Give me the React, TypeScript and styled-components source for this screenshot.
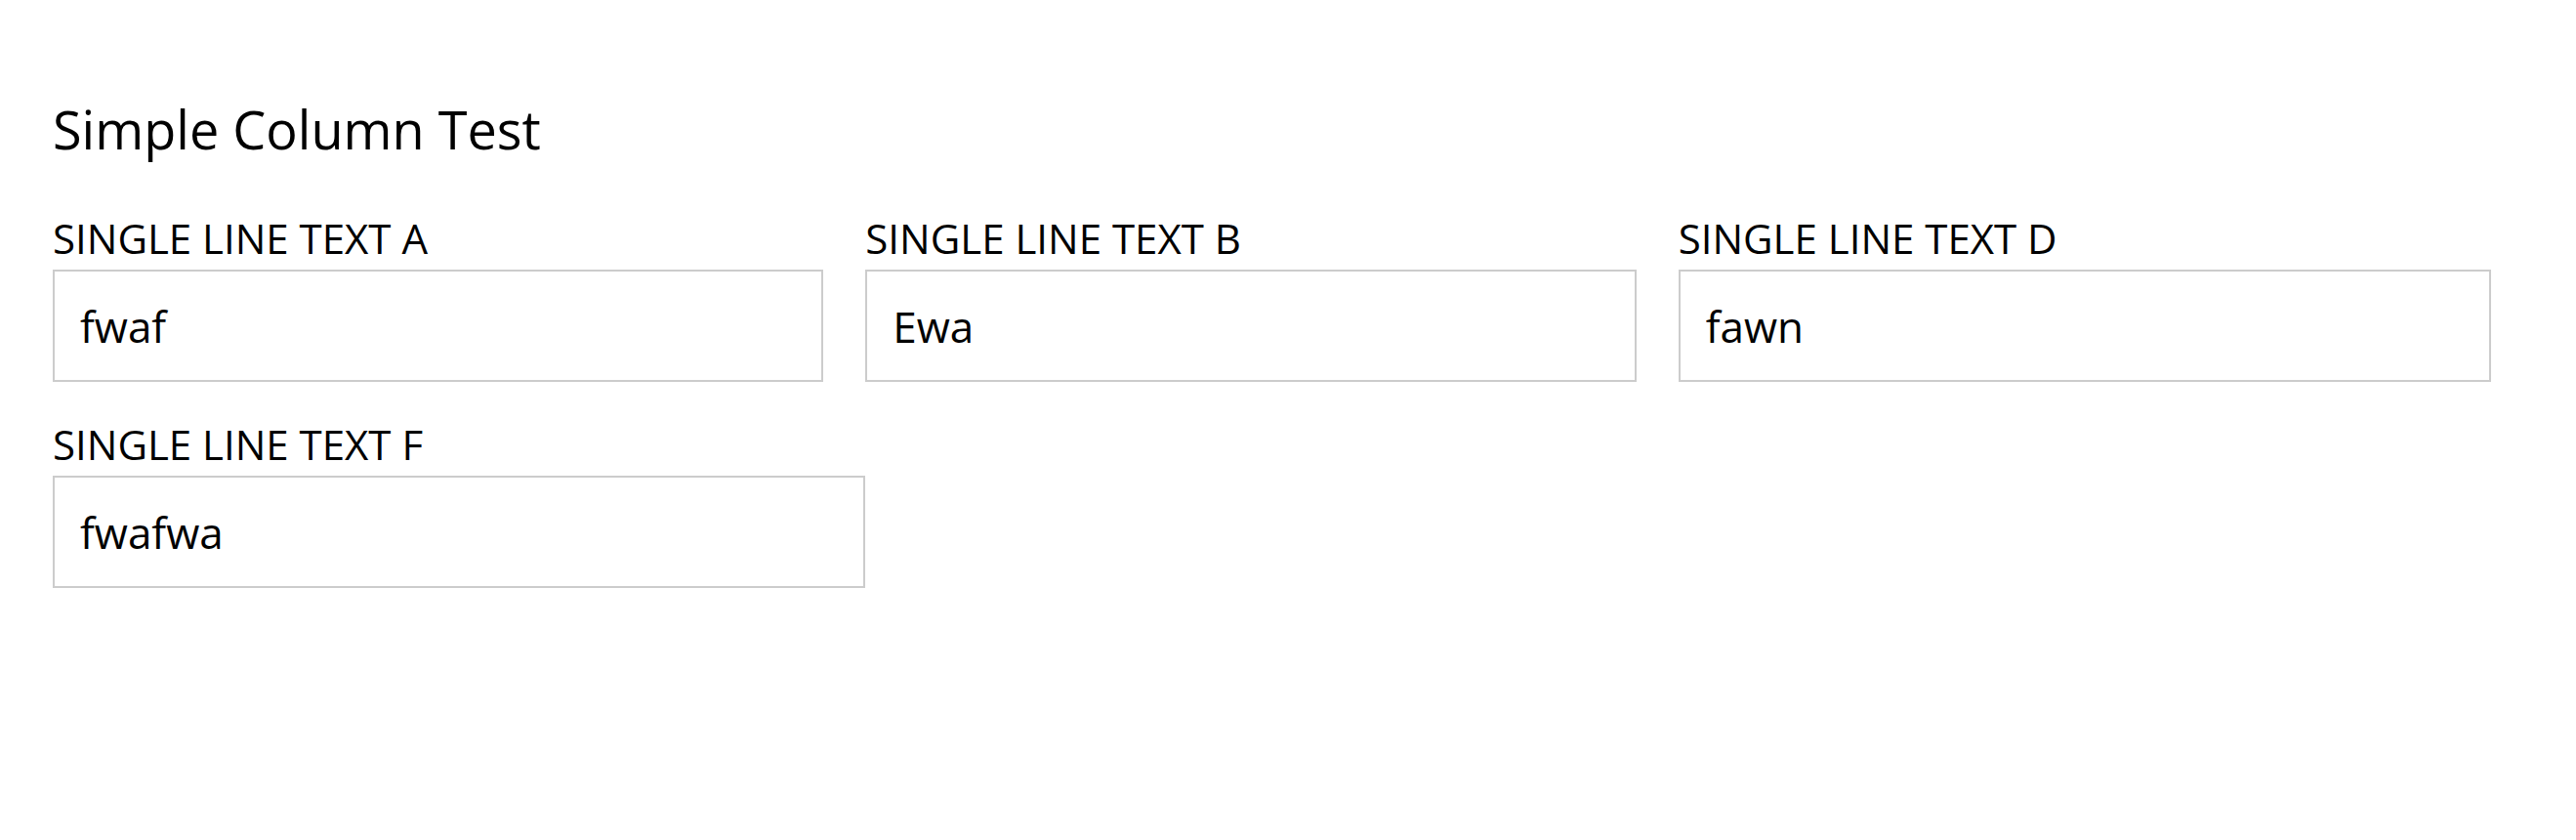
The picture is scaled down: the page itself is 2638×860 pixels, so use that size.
import styled, { createGlobalStyle } from "styled-components";

const GlobalStyle = createGlobalStyle`
  body {
    margin: 0;
    background: #ffffff;
    font-family: "Open Sans", "Liberation Sans", sans-serif;
    color: #000000;
  }
`;

const Page = styled.div`
  width: 2497px;
  padding: 95px 0 0 54px;
`;

const Title = styled.h2`
  margin: 0 0 46px;
  font-size: 54px;
  font-weight: 400;
  line-height: 74px;
`;

const FieldGrid = styled.div`
  display: grid;
  grid-template-columns: repeat(3, 1fr);
  row-gap: 35px;
`;

const Field = styled.div<{ $gap?: boolean }>`
  display: flex;
  flex-direction: column;
  margin-right: ${(p) => (p.$gap ? "43px" : "0")};
`;

const Label = styled.label`
  display: block;
  margin-bottom: 4px;
  font-size: 42px;
  line-height: 57px;
  text-transform: uppercase;
`;

const TextInput = styled.input`
  box-sizing: border-box;
  width: 100%;
  height: 115px;
  padding: 0 26px;
  border: 2.6px solid #cccccc;
  border-radius: 0;
  outline: none;
  background: #ffffff;
  font-family: "Open Sans", "Liberation Sans", sans-serif;
  font-size: 44px;
  font-weight: 400;
  color: #000000;
`;

const fields = [
  { id: "a", label: "Single Line Text A", value: "fwaf", gap: true },
  { id: "b", label: "Single Line Text B", value: "Ewa", gap: true },
  { id: "d", label: "Single Line Text D", value: "fawn", gap: false },
  { id: "f", label: "Single Line Text F", value: "fwafwa", gap: false },
];

const App = () => {
  return (
    <Page>
      <GlobalStyle />
      <Title>Simple Column Test</Title>
      <FieldGrid>
        {fields.map((f) => (
          <Field key={f.id} $gap={f.gap}>
            <Label htmlFor={f.id}>{f.label}</Label>
            <TextInput id={f.id} type="text" defaultValue={f.value} />
          </Field>
        ))}
      </FieldGrid>
    </Page>
  );
};

export default App;
